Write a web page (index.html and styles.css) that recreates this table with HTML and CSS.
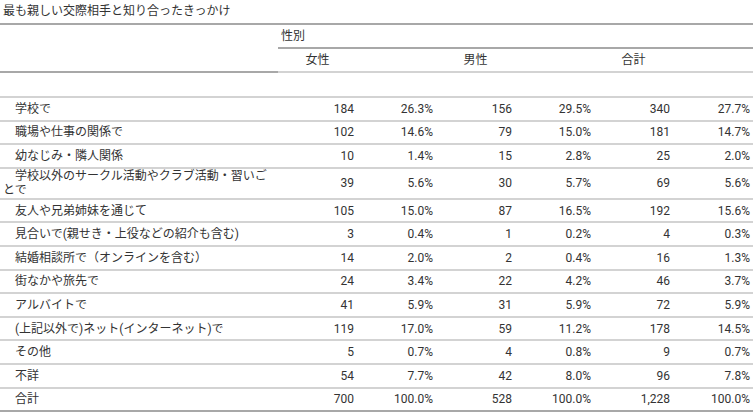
FILE: index.html
```html
<!DOCTYPE html>
<html lang="ja">
<head>
<meta charset="utf-8">
<title>最も親しい交際相手と知り合ったきっかけ</title>
<link rel="stylesheet" href="styles.css">
</head>
<body>
<div class="title">最も親しい交際相手と知り合ったきっかけ</div>
<table class="tbl">
  <colgroup>
    <col class="c-stub">
    <col class="c-num"><col class="c-num"><col class="c-num"><col class="c-num"><col class="c-num"><col class="c-last">
  </colgroup>
  <thead>
    <tr>
      <th class="stub-head" rowspan="2"></th>
      <th class="spanner" colspan="6">性別</th>
    </tr>
    <tr class="col-labels">
      <th>女性</th><th></th><th>男性</th><th></th><th>合計</th><th></th>
    </tr>
  </thead>
  <tbody>
    <tr class="group"><td colspan="7"></td></tr>
    <tr><td class="label">学校で</td><td>184</td><td>26.3%</td><td>156</td><td>29.5%</td><td>340</td><td>27.7%</td></tr>
    <tr><td class="label">職場や仕事の関係で</td><td>102</td><td>14.6%</td><td>79</td><td>15.0%</td><td>181</td><td>14.7%</td></tr>
    <tr><td class="label">幼なじみ・隣人関係</td><td>10</td><td>1.4%</td><td>15</td><td>2.8%</td><td>25</td><td>2.0%</td></tr>
    <tr class="tight"><td class="label">学校以外のサークル活動やクラブ活動・習いごとで</td><td>39</td><td>5.6%</td><td>30</td><td>5.7%</td><td>69</td><td>5.6%</td></tr>
    <tr><td class="label">友人や兄弟姉妹を通じて</td><td>105</td><td>15.0%</td><td>87</td><td>16.5%</td><td>192</td><td>15.6%</td></tr>
    <tr><td class="label">見合いで(親せき・上役などの紹介も含む)</td><td>3</td><td>0.4%</td><td>1</td><td>0.2%</td><td>4</td><td>0.3%</td></tr>
    <tr><td class="label">結婚相談所で（オンラインを含む）</td><td>14</td><td>2.0%</td><td>2</td><td>0.4%</td><td>16</td><td>1.3%</td></tr>
    <tr><td class="label">街なかや旅先で</td><td>24</td><td>3.4%</td><td>22</td><td>4.2%</td><td>46</td><td>3.7%</td></tr>
    <tr><td class="label">アルバイトで</td><td>41</td><td>5.9%</td><td>31</td><td>5.9%</td><td>72</td><td>5.9%</td></tr>
    <tr><td class="label">(上記以外で)ネット(インターネット)で</td><td>119</td><td>17.0%</td><td>59</td><td>11.2%</td><td>178</td><td>14.5%</td></tr>
    <tr><td class="label">その他</td><td>5</td><td>0.7%</td><td>4</td><td>0.8%</td><td>9</td><td>0.7%</td></tr>
    <tr><td class="label">不詳</td><td>54</td><td>7.7%</td><td>42</td><td>8.0%</td><td>96</td><td>7.8%</td></tr>
    <tr class="total"><td class="label">合計</td><td>700</td><td>100.0%</td><td>528</td><td>100.0%</td><td>1,228</td><td>100.0%</td></tr>
  </tbody>
</table>
</body>
</html>
```
FILE: styles.css
```css
html, body {
  margin: 0;
  padding: 0;
  background: #ffffff;
}
body {
  font-family: Roboto, "Noto Sans CJK JP", sans-serif;
  font-size: 12px;
  color: #333333;
}
.title {
  height: 23px;
  line-height: 23px;
  padding-left: 3px;
  white-space: nowrap;
}
.tbl {
  width: 753px;
  table-layout: fixed;
  border-collapse: separate;
  border-spacing: 0;
  border-top: 2px solid #a8a8a8;
  border-bottom: 2px solid #a8a8a8;
}
.c-stub { width: 278px; }
.c-num { width: 79px; }
.c-last { width: 80px; }
.tbl th, .tbl td {
  padding: 4px 3px 4px 3px;
  line-height: 14px;
  font-weight: normal;
  vertical-align: middle;
}
.stub-head {
  border-bottom: 2px solid #a8a8a8;
}
.spanner {
  text-align: left;
  border-bottom: 2px solid #a8a8a8;
}
.col-labels th {
  text-align: center;
  border-bottom: 2px solid #d3d3d3;
}
.tbl tbody td {
  text-align: right;
  padding-top: 3.8px;
  padding-bottom: 3.8px;
  border-bottom: 2px solid #d3d3d3;
}
.tbl tbody tr:last-child td {
  border-bottom: none;
}
.tbl tbody td.label {
  text-align: left;
  text-indent: 12px;
  padding-right: 5px;
}
.tbl tbody .group td {
  height: 15px;
  padding-top: 4px;
  padding-bottom: 4px;
}
.tbl tbody .tight td.label {
  padding-top: 0.5px;
  padding-bottom: 0.5px;
  line-height: 14px;
}
.total td.label {
  text-indent: 0;
}
```
